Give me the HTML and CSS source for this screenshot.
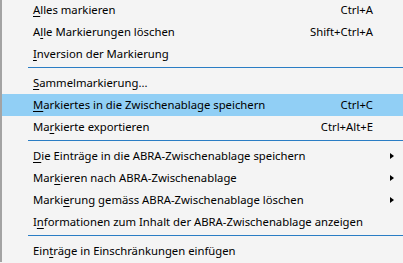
FILE: index.html
```html
<!DOCTYPE html>
<html lang="de">

<head>
  <meta charset="UTF-8">
  <meta name="viewport" content="width=device-width, initial-scale=1.0">
  <title>Markierung</title>
  <link rel="stylesheet" href="styles.css">
</head>

<body>

  <ul class="menu">
    <li class="item"><span class="label"><u>A</u>lles markieren</span><span class="key">Ctrl+A</span></li>
    <li class="item"><span class="label">A<u>l</u>le Markierungen löschen</span><span class="key">Shift+Ctrl+A</span></li>
    <li class="item"><span class="label"><u>I</u>nversion der Markierung</span></li>
    <li class="sep"></li>
    <li class="item"><span class="label"><u>S</u>ammelmarkierung...</span></li>
    <li class="item active"><span class="label"><u>M</u>arkiertes in die Zwischenablage speichern</span><span class="key">Ctrl+C</span></li>
    <li class="item"><span class="label">Ma<u>r</u>kierte exportieren</span><span class="key">Ctrl+Alt+E</span></li>
    <li class="sep"></li>
    <li class="item"><span class="label"><u>D</u>ie Einträge in die ABRA-Zwischenablage speichern</span><span class="arrow"></span></li>
    <li class="item"><span class="label">Mar<u>k</u>ieren nach ABRA-Zwischenablage</span><span class="arrow"></span></li>
    <li class="item"><span class="label">Marki<u>e</u>rung gemäss ABRA-Zwischenablage löschen</span><span class="arrow"></span></li>
    <li class="item"><span class="label">I<u>n</u>formationen zum Inhalt der ABRA-Zwischenablage anzeigen</span></li>
    <li class="sep"></li>
    <li class="item"><span class="label">Ein<u>t</u>räge in Einschränkungen einfügen</span></li>
  </ul>

</body>

</html>
```

FILE: styles.css
```css
body {
  font-family: "Noto Sans", "Open Sans", sans-serif;
  font-size: 11.3px;
  color: #000;
  background-color: #f4f4f4;
  margin: 0;
  padding: 0;
  overflow: hidden;
}
.menu {
  list-style: none;
  margin: -1px 0 0 0;
  padding: 0;
  min-height: 100vh;
  border-left: 2px solid #a3a3a3;
}
.item {
  display: grid;
  grid-template-columns: 1fr auto 30px;
  align-items: center;
  height: 22px;
  padding-left: 31px;
  line-height: 22px;
  white-space: nowrap;
}
.item.active {
  background-color: #91cff5;
}
.label {
  grid-column: 1;
}
.key {
  grid-column: 2;
}
.arrow {
  grid-column: 3;
  justify-self: start;
  margin-left: 17px;
  width: 0;
  height: 0;
  border-top: 3.5px solid transparent;
  border-bottom: 3.5px solid transparent;
  border-left: 4px solid #000;
}
u {
  text-decoration-thickness: 1px;
  text-underline-offset: 2px;
}
.sep {
  box-sizing: border-box;
  height: 7px;
  padding-top: 2px;
  margin-left: 26px;
}
.sep::before {
  content: "";
  display: block;
  height: 1px;
  background-color: #2a7dc4;
}
```
